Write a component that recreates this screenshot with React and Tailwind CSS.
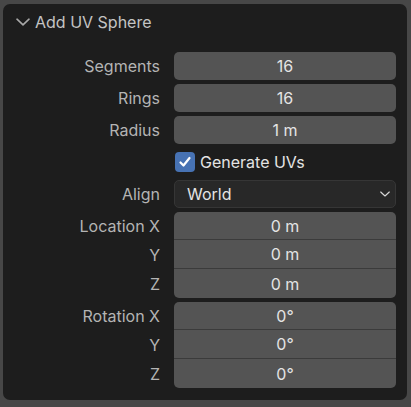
const FONT = { fontFamily: "Inter, 'Noto Sans', 'DejaVu Sans', sans-serif" };

const LOCATION = [
  ["Location X", "0 m"],
  ["Y", "0 m"],
  ["Z", "0 m"],
];

const ROTATION = [
  ["Rotation X", "0°"],
  ["Y", "0°"],
  ["Z", "0°"],
];

function Chevron({ className }) {
  return (
    <svg viewBox="0 0 14 8" className={className} fill="none" stroke="currentColor" strokeWidth="1.6" strokeLinecap="round" strokeLinejoin="round">
      <path d="M1 1.2 L7 6.8 L13 1.2" />
    </svg>
  );
}

function Row({ label, children }) {
  return (
    <div className="flex items-center h-[28px]">
      <div className="w-[157px] text-right text-[16px] text-[#b4b4b4]">{label}</div>
      <div className="ml-[14px] w-[222px]">{children}</div>
    </div>
  );
}

function Field({ value }) {
  return (
    <div className="h-[28px] rounded-[5px] bg-[#545454] flex items-center justify-center text-[16px] text-[#e4e4e4]">
      {value}
    </div>
  );
}

function Group({ rows }) {
  return (
    <div className="flex">
      <div className="w-[157px] flex flex-col">
        {rows.map(([l]) => (
          <div key={l} className="h-[29px] first:h-[28px] flex items-center justify-end text-[16px] text-[#b4b4b4]">
            {l}
          </div>
        ))}
      </div>
      <div className="ml-[14px] w-[222px] rounded-[5px] bg-[#545454] divide-y divide-[#3b3b3b] overflow-hidden">
        {rows.map(([l, v]) => (
          <div key={l} className="h-[29px] first:h-[28px] flex items-center justify-center text-[16px] text-[#e4e4e4]">
            {v}
          </div>
        ))}
      </div>
    </div>
  );
}

export default function App() {
  return (
    <div className="w-[411px] h-[407px] bg-[#474747] pt-[4px] pl-[3px] pr-[4px] pb-[7px]" style={FONT}>
      <div className="h-full rounded-[7px] bg-[#1d1d1d]">
        <div className="h-[36px] flex items-center pl-[13px] text-[#c4c4c4]">
          <Chevron className="w-[14px] h-[8px] text-[#a8a8a8]" />
          <span className="ml-[5px] text-[16px]">Add UV Sphere</span>
        </div>

        <div className="mt-[12px] flex flex-col gap-[4px]">
          <Row label="Segments"><Field value="16" /></Row>
          <Row label="Rings"><Field value="16" /></Row>
          <Row label="Radius"><Field value="1 m" /></Row>
          <Row label="">
            <div className="flex items-center">
              <div className="w-[20px] h-[20px] ml-[1px] rounded-[4px] bg-[#4772b3] flex items-center justify-center">
                <svg viewBox="0 0 14 14" className="w-[14px] h-[14px]" fill="none" stroke="#ffffff" strokeWidth="2.2" strokeLinecap="round" strokeLinejoin="round">
                  <path d="M2.5 7.5 L5.5 10.5 L11.5 3" />
                </svg>
              </div>
              <span className="ml-[5px] text-[16px] text-[#e4e4e4]">Generate UVs</span>
            </div>
          </Row>
          <Row label="Align">
            <div className="h-[28px] rounded-[5px] bg-[#282828] border border-[#363636] flex items-center justify-between pl-[12px] pr-[5px] text-[16px] text-[#e4e4e4]">
              <span>World</span>
              <Chevron className="w-[10px] h-[6px] text-[#d8d8d8]" />
            </div>
          </Row>
          <Group rows={LOCATION} />
          <Group rows={ROTATION} />
        </div>
      </div>
    </div>
  );
}
